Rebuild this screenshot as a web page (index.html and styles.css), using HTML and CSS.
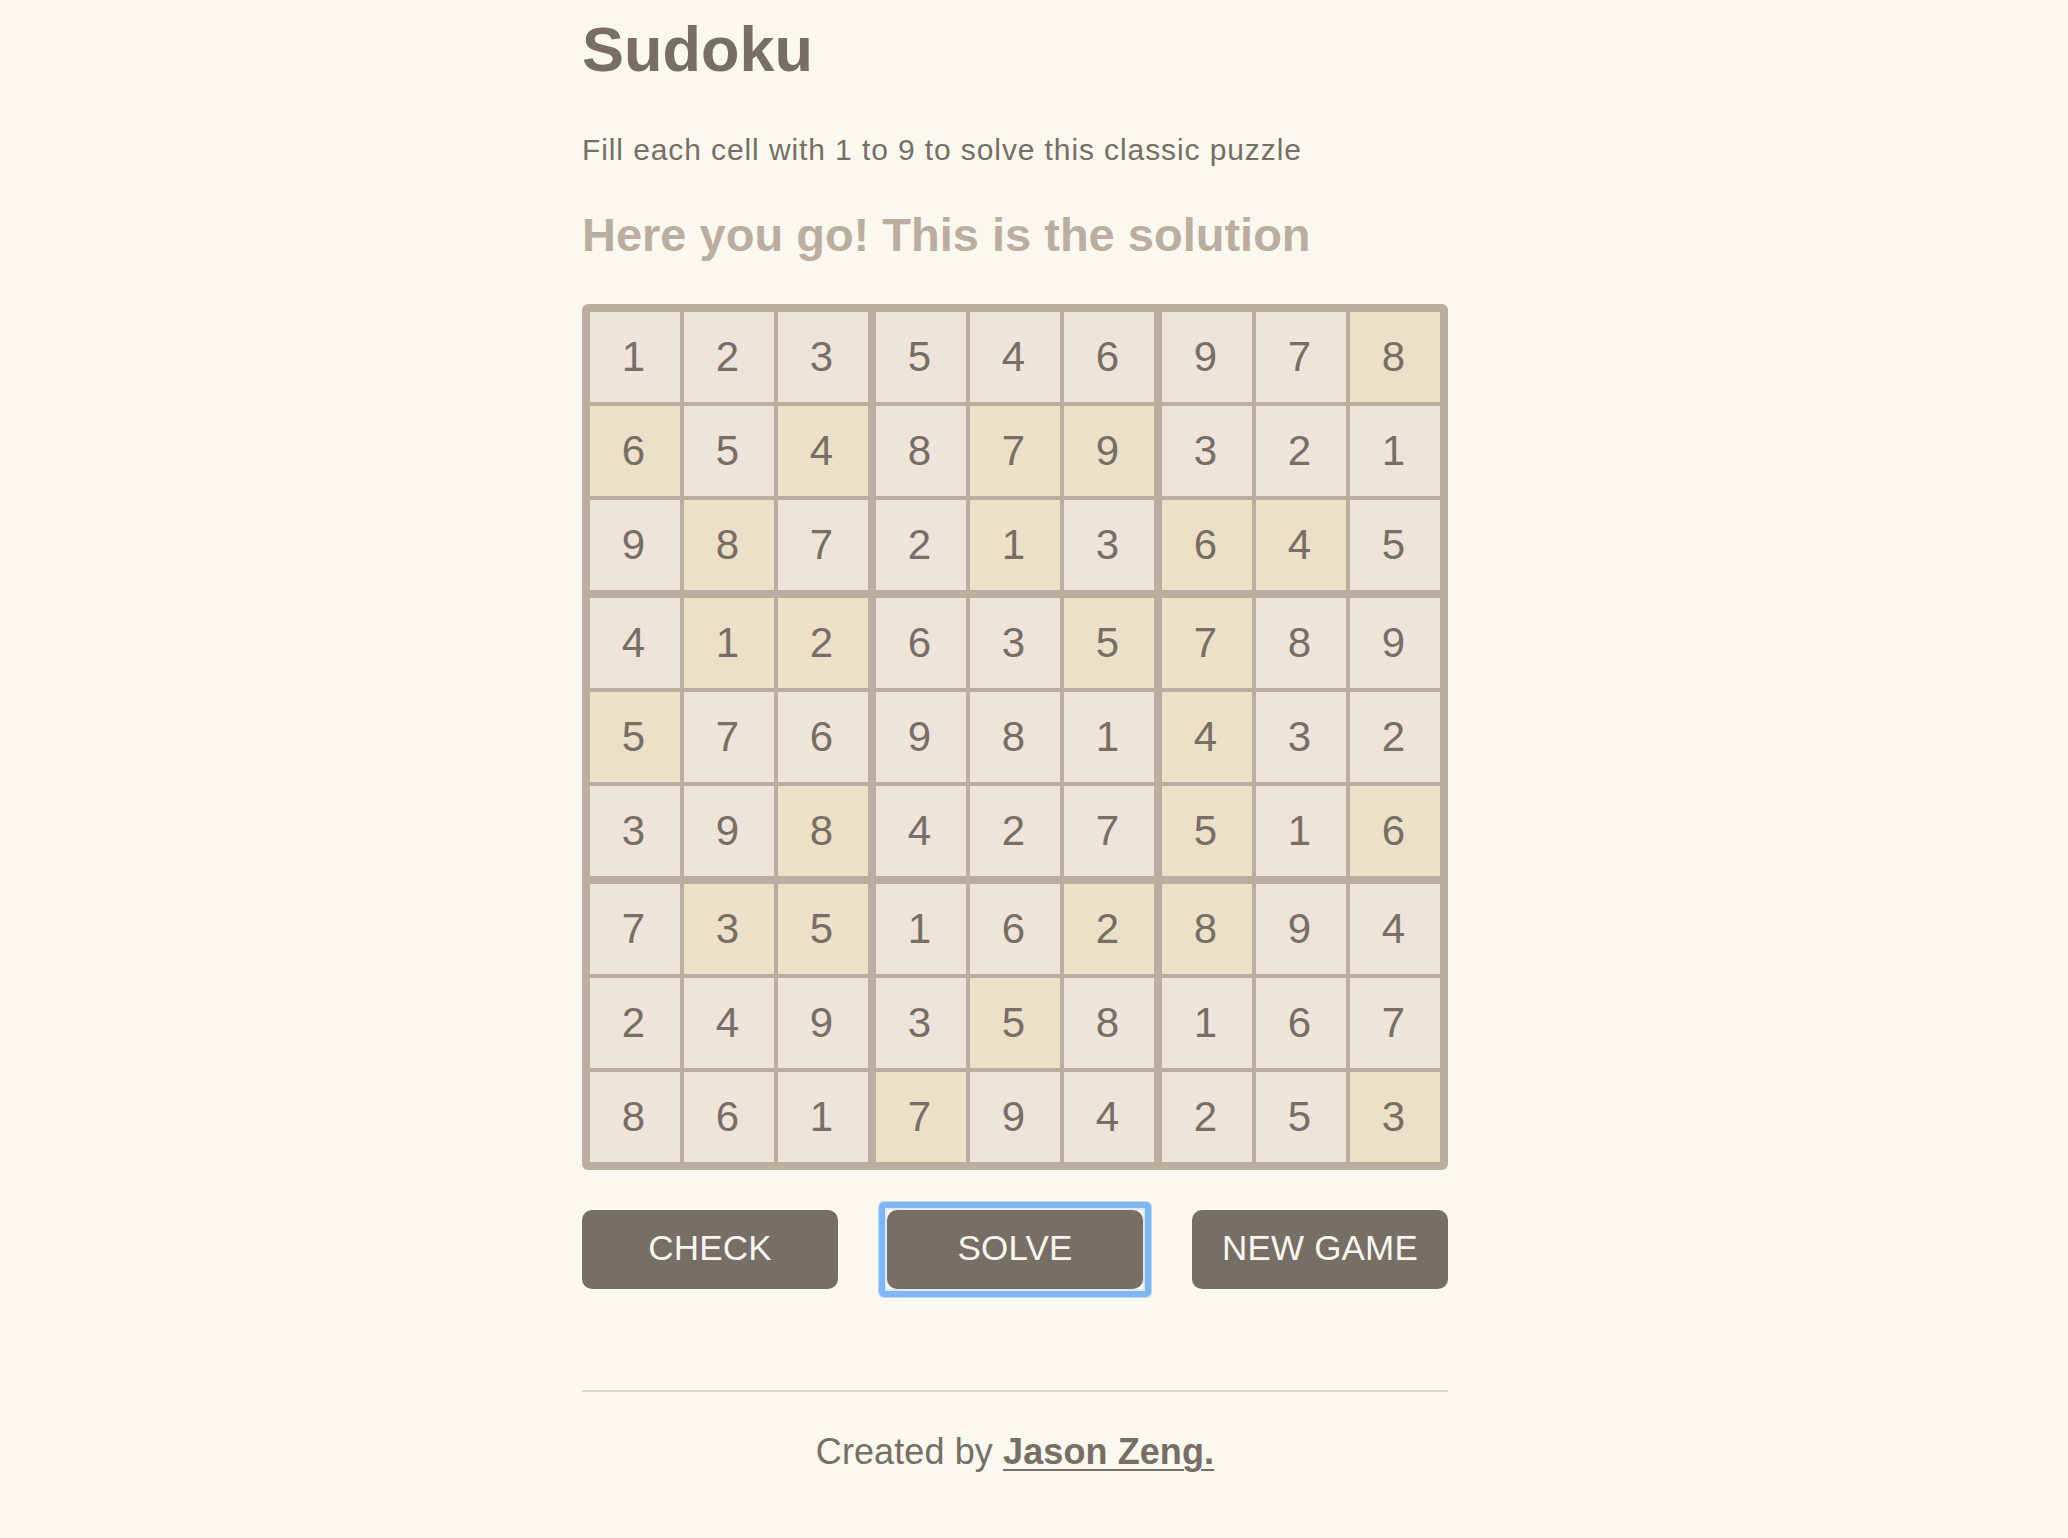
FILE: index.html
```html
<!DOCTYPE html>
<html lang="en">
<head>
<meta charset="utf-8">
<title>Sudoku</title>
<link rel="stylesheet" href="styles.css">
</head>
<body>
<div class="container">
  <h1 class="title">Sudoku</h1>
  <p class="intro">Fill each cell with 1 to 9 to solve this classic puzzle</p>
  <h2 class="message">Here you go! This is the solution</h2>
  <div class="board">
    <div class="cell">1</div><div class="cell">2</div><div class="cell">3</div><div class="cell">5</div><div class="cell">4</div><div class="cell">6</div><div class="cell">9</div><div class="cell">7</div><div class="cell given">8</div>
    <div class="cell given">6</div><div class="cell">5</div><div class="cell given">4</div><div class="cell">8</div><div class="cell given">7</div><div class="cell given">9</div><div class="cell">3</div><div class="cell">2</div><div class="cell">1</div>
    <div class="cell">9</div><div class="cell given">8</div><div class="cell">7</div><div class="cell">2</div><div class="cell given">1</div><div class="cell">3</div><div class="cell given">6</div><div class="cell given">4</div><div class="cell">5</div>
    <div class="cell">4</div><div class="cell given">1</div><div class="cell given">2</div><div class="cell">6</div><div class="cell">3</div><div class="cell given">5</div><div class="cell given">7</div><div class="cell">8</div><div class="cell">9</div>
    <div class="cell given">5</div><div class="cell">7</div><div class="cell">6</div><div class="cell">9</div><div class="cell">8</div><div class="cell">1</div><div class="cell given">4</div><div class="cell">3</div><div class="cell">2</div>
    <div class="cell">3</div><div class="cell">9</div><div class="cell given">8</div><div class="cell">4</div><div class="cell">2</div><div class="cell">7</div><div class="cell given">5</div><div class="cell">1</div><div class="cell given">6</div>
    <div class="cell">7</div><div class="cell given">3</div><div class="cell given">5</div><div class="cell">1</div><div class="cell">6</div><div class="cell given">2</div><div class="cell given">8</div><div class="cell">9</div><div class="cell">4</div>
    <div class="cell">2</div><div class="cell">4</div><div class="cell">9</div><div class="cell">3</div><div class="cell given">5</div><div class="cell">8</div><div class="cell">1</div><div class="cell">6</div><div class="cell">7</div>
    <div class="cell">8</div><div class="cell">6</div><div class="cell">1</div><div class="cell given">7</div><div class="cell">9</div><div class="cell">4</div><div class="cell">2</div><div class="cell">5</div><div class="cell given">3</div>
  </div>
  <div class="actions">
    <button class="btn">CHECK</button>
    <button class="btn focused">SOLVE</button>
    <button class="btn">NEW GAME</button>
  </div>
  <hr class="divider">
  <p class="credit">Created by <a class="author" href="#">Jason Zeng.</a></p>
</div>
</body>
</html>
```
FILE: styles.css
```css
html, body {
  margin: 0;
  padding: 0;
  background: #faf8ef;
}
body {
  padding-right: 38px;
  font-family: "Liberation Sans", Arial, sans-serif;
  color: #776e65;
}
.container {
  width: 866px;
  margin: 0 auto;
  padding-bottom: 40px;
}
.title {
  margin: 18px 0 0;
  font-size: 63px;
  line-height: 62px;
  font-weight: bold;
  color: #776e65;
}
.intro {
  margin: 55px 0 0;
  font-size: 30px;
  line-height: 30px;
  letter-spacing: 0.9px;
  color: #776e65;
}
.message {
  margin: 46px 0 0;
  font-size: 47px;
  line-height: 47px;
  font-weight: bold;
  color: #bbada0;
}
.board {
  margin-top: 46px;
  display: grid;
  grid-template-columns: 90px 90px 94px 90px 90px 94px 90px 90px 90px;
  grid-template-rows: 90px 90px 94px 90px 90px 94px 90px 90px 90px;
  gap: 4px;
  padding: 8px;
  background: #bbada0;
  border-radius: 6px;
}
.cell {
  display: flex;
  align-items: center;
  justify-content: center;
  background: #eee4da;
  font-size: 42px;
  color: #776e65;
  padding-right: 3px;
}
.cell.given {
  background: #ede0c8;
}
.cell:nth-child(9n+3),
.cell:nth-child(9n+6) {
  margin-right: 4px;
}
.cell:nth-child(n+19):nth-child(-n+27),
.cell:nth-child(n+46):nth-child(-n+54) {
  margin-bottom: 4px;
}
.actions {
  margin-top: 40px;
  display: flex;
  justify-content: space-between;
}
.btn {
  position: relative;
  width: 256px;
  height: 79px;
  border: none;
  border-radius: 10px;
  background: #776e65;
  color: #f9f6f2;
  font-family: "Liberation Sans", Arial, sans-serif;
  font-size: 35px;
  letter-spacing: 0.2px;
  padding: 0 0 4px;
  cursor: pointer;
}
.btn.focused::before {
  content: "";
  position: absolute;
  top: -8px;
  left: -8px;
  right: -8px;
  bottom: -8px;
  border: 6px solid #80b7f2;
  border-radius: 5px;
  box-shadow: inset 0 0 0 2px #dde9f6, 0 0 0 1px #bcd6f3;
  pointer-events: none;
}
.divider {
  margin: 101px 0 0;
  border: none;
  height: 2px;
  background: #d9d5cf;
}
.credit {
  margin: 42px 0 0;
  text-align: center;
  font-size: 36px;
  line-height: 35px;
  letter-spacing: 0.1px;
  color: #776e65;
}
.author {
  color: #776e65;
  font-weight: bold;
  text-decoration: underline;
  text-decoration-thickness: 2px;
  text-underline-offset: 5px;
}
```
